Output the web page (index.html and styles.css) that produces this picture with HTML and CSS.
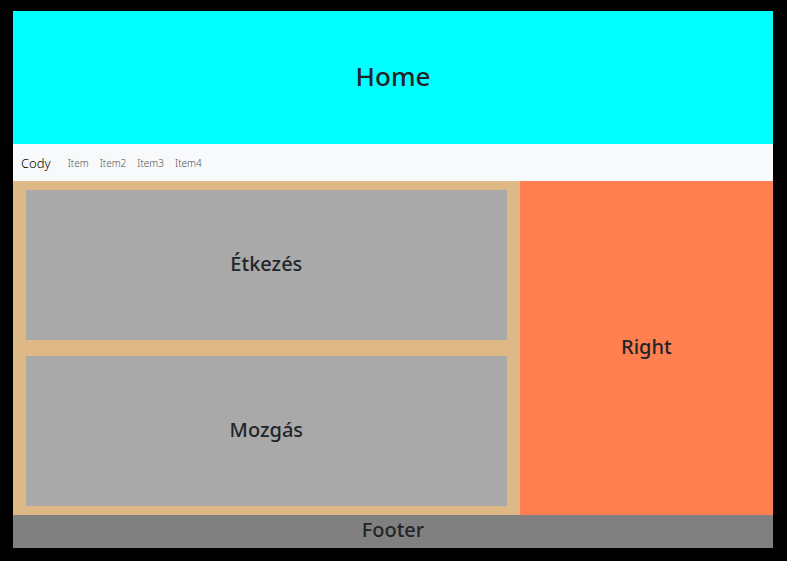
FILE: index.html
```html
<!DOCTYPE html>
<html lang="hu">
<head>
<meta charset="utf-8">
<title>Home</title>
<link rel="stylesheet" href="styles.css">
</head>
<body>
<div class="page">
  <header class="hero"><h1>Home</h1></header>
  <nav class="navbar">
    <a class="brand" href="#">Cody</a>
    <a class="item" href="#">Item</a>
    <a class="item" href="#">Item2</a>
    <a class="item" href="#">Item3</a>
    <a class="item" href="#">Item4</a>
  </nav>
  <div class="content">
    <main class="left">
      <section class="card"><h2>Étkezés</h2></section>
      <section class="card"><h2>Mozgás</h2></section>
    </main>
    <aside class="right"><h2>Right</h2></aside>
  </div>
  <footer class="footer"><h2>Footer</h2></footer>
</div>
</body>
</html>
```
FILE: styles.css
```css
* { box-sizing: border-box; }
body {
  margin: 0;
  min-height: 100vh;
  display: flex;
  padding: 11px 14px 13px 13px;
  background: #000;
  color: #212529;
  font-family: "Segoe UI", "Noto Sans", "Open Sans", sans-serif;
}
.page { flex: 1; display: flex; flex-direction: column; }
h1, h2 { margin: 0; font-weight: 500; }
h1 { font-size: 26px; line-height: 32px; }
h2 { font-size: 20px; line-height: 24px; }
.hero {
  display: flex;
  align-items: center;
  justify-content: center;
  padding: 49px 0 52px;
  background: aqua;
}
.navbar {
  display: flex;
  align-items: center;
  gap: 11px;
  padding: 9px 8px 7px;
  background: #f8f9fa;
  line-height: 21px;
}
.navbar a { text-decoration: none; }
.brand { margin-right: 6px; color: #000; font-size: 13px; font-weight: 300; }
.item { color: #505152; font-size: 10px; font-weight: 300; }
.content { flex: 1; display: grid; grid-template-columns: 2fr 1fr; }
.left {
  display: grid;
  gap: 16px;
  padding: 9px 13px;
  background: burlywood;
}
.card, .right {
  display: flex;
  align-items: center;
  justify-content: center;
  padding-bottom: 3px;
}
.card { background: darkgray; }
.right { background: coral; }
.footer {
  padding: 3px 0 6px;
  background: gray;
  text-align: center;
}
```
